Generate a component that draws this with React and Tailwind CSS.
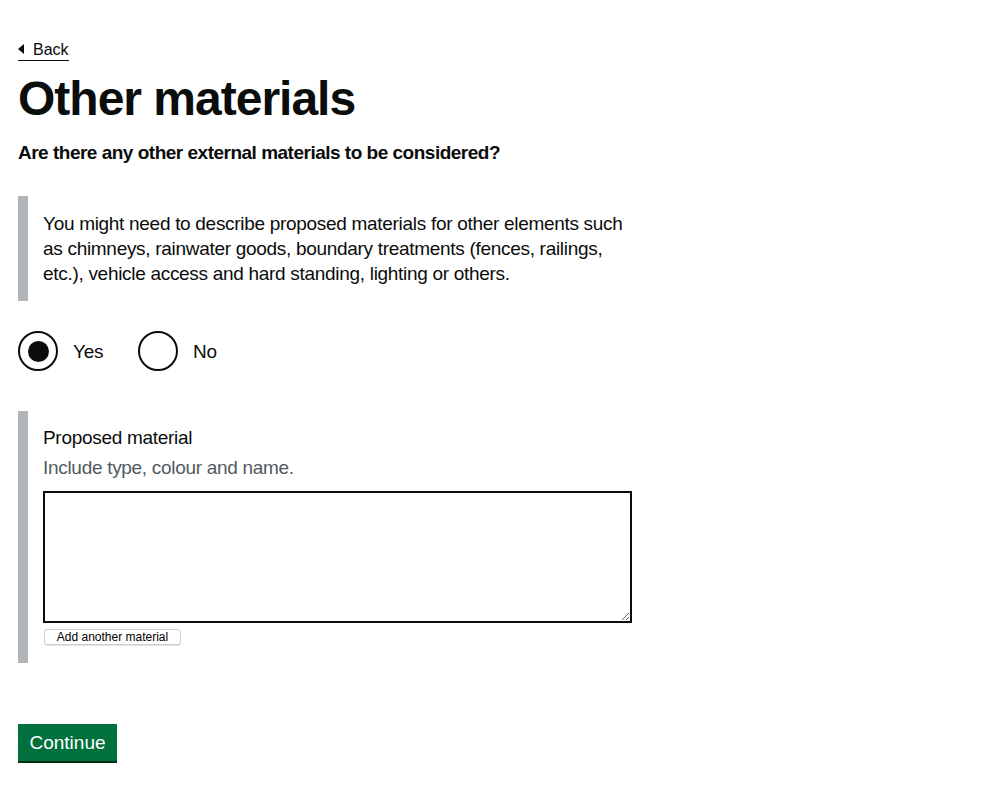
import { useState } from 'react';

const font = { fontFamily: '"Liberation Sans", Arial, sans-serif' };

function Radio({ label, checked, onSelect }) {
  return (
    <button type="button" onClick={onSelect} className="flex items-center mr-[20px] cursor-pointer">
      <span className="w-[40px] h-[40px] rounded-full border-2 border-[#0b0c0c] bg-white flex items-center justify-center">
        {checked && <span className="w-[21px] h-[21px] rounded-full bg-[#0b0c0c]" />}
      </span>
      <span className="pl-[15px] pr-[15px] text-[19px] leading-[25px] tracking-[-0.3px] text-[#0b0c0c]">{label}</span>
    </button>
  );
}

export default function App() {
  const [answer, setAnswer] = useState('yes');

  return (
    <div style={font} className="min-h-screen bg-white text-[#0b0c0c] px-[18px] pt-[37px]">
      <a href="#" className="inline-flex items-center gap-[9px] border-b border-[#0b0c0c] text-[16px] leading-[20px] text-[#0b0c0c]">
        <svg width="6" height="10" viewBox="0 0 6 10" className="mt-[-1px]">
          <path d="M6 0 L0 5 L6 10 Z" fill="#0b0c0c" />
        </svg>
        <span>Back</span>
      </a>

      <h1 className="mt-[13px] text-[48px] leading-[50px] font-bold tracking-[-1px]">Other materials</h1>

      <h2 className="mt-[16px] text-[19px] leading-[25px] font-bold tracking-[-0.5px]">
        Are there any other external materials to be considered?
      </h2>

      <div className="mt-[31px] w-[614px] border-l-[10px] border-[#b1b4b6] pl-[15px] py-[15px] text-[19px] leading-[25px] tracking-[-0.3px]">
        You might need to describe proposed materials for other elements such as chimneys, rainwater goods, boundary
        treatments (fences, railings, etc.), vehicle access and hard standing, lighting or others.
      </div>

      <div className="mt-[30px] flex">
        <Radio label="Yes" checked={answer === 'yes'} onSelect={() => setAnswer('yes')} />
        <Radio label="No" checked={answer === 'no'} onSelect={() => setAnswer('no')} />
      </div>

      <div className="mt-[40px] w-[614px] border-l-[10px] border-[#b1b4b6] pl-[15px] pt-[14px] pb-[18px]">
        <label className="block text-[19px] leading-[25px] tracking-[-0.3px]">Proposed material</label>
        <div className="mt-[5px] text-[19px] leading-[25px] tracking-[-0.3px] text-[#505a5f]">
          Include type, colour and name.
        </div>
        <textarea className="mt-[11px] block w-[589px] h-[132px] border-2 border-[#0b0c0c] bg-white outline-none" />
        <button
          type="button"
          className="mt-[6px] ml-[1px] block w-[137px] h-[16px] rounded-[3px] border border-[#cfcfcf] bg-white text-[12px] leading-[14px] text-black shadow-[0_1px_0_#e2e2e2]"
        >
          Add another material
        </button>
      </div>

      <button
        type="button"
        className="mt-[61px] block w-[99px] h-[37px] bg-[#00703c] text-white text-[19px] leading-[19px] shadow-[0_2px_0_#002d18]"
      >
        Continue
      </button>
    </div>
  );
}
